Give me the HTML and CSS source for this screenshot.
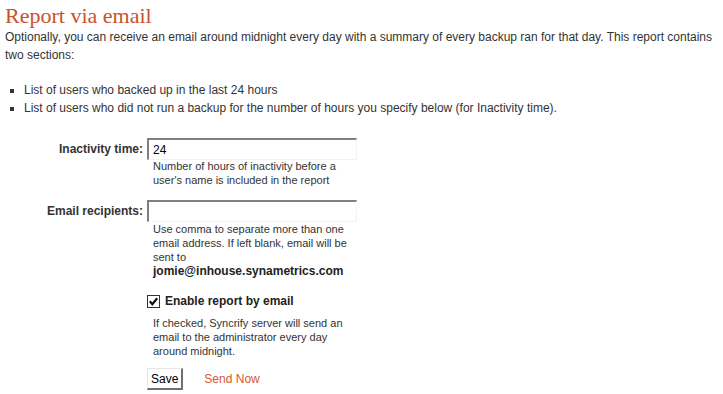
FILE: index.html
```html
<!DOCTYPE html>
<html>
<head>
<meta charset="utf-8">
<link rel="stylesheet" href="styles.css">
</head>
<body>
<div class="page">
  <h1 class="title">Report via email</h1>
  <p class="intro">Optionally, you can receive an email around midnight every day with a summary of every backup ran for that day. This report contains two sections:</p>
  <ul class="sections">
    <li>List of users who backed up in the last 24 hours</li>
    <li>List of users who did not run a backup for the number of hours you specify below (for Inactivity time).</li>
  </ul>
  <div class="form">
    <label class="label" for="inact">Inactivity time:</label>
    <div class="field">
      <input id="inact" class="text" type="text" value="24">
      <div class="help first">Number of hours of inactivity before a user's name is included in the report</div>
    </div>
    <label class="label" for="recip">Email recipients:</label>
    <div class="field">
      <input id="recip" class="text" type="text" value="">
      <div class="help">Use comma to separate more than one email address. If left blank, email will be sent to <b>jomie@inhouse.synametrics.com</b></div>
    </div>
    <div class="label"></div>
    <div class="field">
      <label class="check"><span class="box"><svg width="11" height="11" viewBox="0 0 11 11"><path d="M1.8 5.3 L4.3 8.2 L9.2 2.3" fill="none" stroke="#111" stroke-width="2.2"/></svg></span>Enable report by email</label>
      <div class="help">If checked, Syncrify server will send an email to the administrator every day around midnight.</div>
      <div class="actions">
        <button class="save" type="button">Save</button>
        <a class="send" href="#">Send Now</a>
      </div>
    </div>
  </div>
</div>
</body>
</html>
```

FILE: styles.css
```css
html, body {
  margin: 0;
  padding: 0;
  background: #fff;
}
.page {
  padding: 3px 5px 0 5px;
  font-family: "Liberation Sans", Arial, sans-serif;
  font-size: 12px;
  color: #333;
}
.title {
  margin: 0;
  font-family: "Liberation Serif", "Times New Roman", serif;
  font-weight: normal;
  font-size: 22px;
  line-height: 25px;
  color: #c9522b;
}
.intro {
  margin: 0;
  line-height: 18px;
}
.sections {
  margin: 17px 0 0 0;
  padding: 0 0 0 19px;
  list-style: square;
  line-height: 18px;
}
.form {
  margin-top: 21px;
  display: grid;
  grid-template-columns: 138px 210px;
  column-gap: 4px;
  row-gap: 13px;
  align-items: start;
}
.label {
  text-align: right;
  font-weight: bold;
  line-height: 22px;
  color: #333;
}
.field {
  display: flex;
  flex-direction: column;
}
.text {
  box-sizing: border-box;
  width: 210px;
  height: 22px;
  margin: 0;
  padding: 1px 4px 0 4px;
  font-family: "Liberation Sans", Arial, sans-serif;
  font-size: 12px;
  color: #000;
  border-style: solid;
  border-width: 2px 1px 1px 2px;
  border-color: #7f7f7f #f2f2f2 #f2f2f2 #7f7f7f;
  background: #fff;
  outline: none;
}
.help {
  padding: 0 6px;
  margin-top: 0;
  font-size: 11px;
  line-height: 14px;
  color: #333;
}
.help.first {
  margin-top: -1px;
}
.help b {
  font-size: 12px;
  color: #222;
}
.check {
  display: flex;
  align-items: center;
  gap: 5px;
  font-weight: bold;
  line-height: 18px;
  color: #222;
  margin-top: 1px;
}
.box {
  width: 11px;
  height: 11px;
  border: 1px solid #333;
  display: flex;
  align-items: center;
  justify-content: center;
  background: #fff;
}
.box svg {
  display: block;
}
.check + .help {
  margin-top: 6px;
}
.actions {
  display: flex;
  align-items: center;
  gap: 21px;
  margin-top: 10px;
}
.save {
  box-sizing: border-box;
  height: 22px;
  padding: 0 3px;
  margin: 0;
  font-family: "Liberation Sans", Arial, sans-serif;
  font-size: 12px;
  color: #000;
  background: #fff;
  border-style: solid;
  border-width: 1px 2px 2px 1px;
  border-color: #e6e6e6 #6f6f6f #6f6f6f #e6e6e6;
}
.send {
  color: #d35a35;
  text-decoration: none;
}
```
